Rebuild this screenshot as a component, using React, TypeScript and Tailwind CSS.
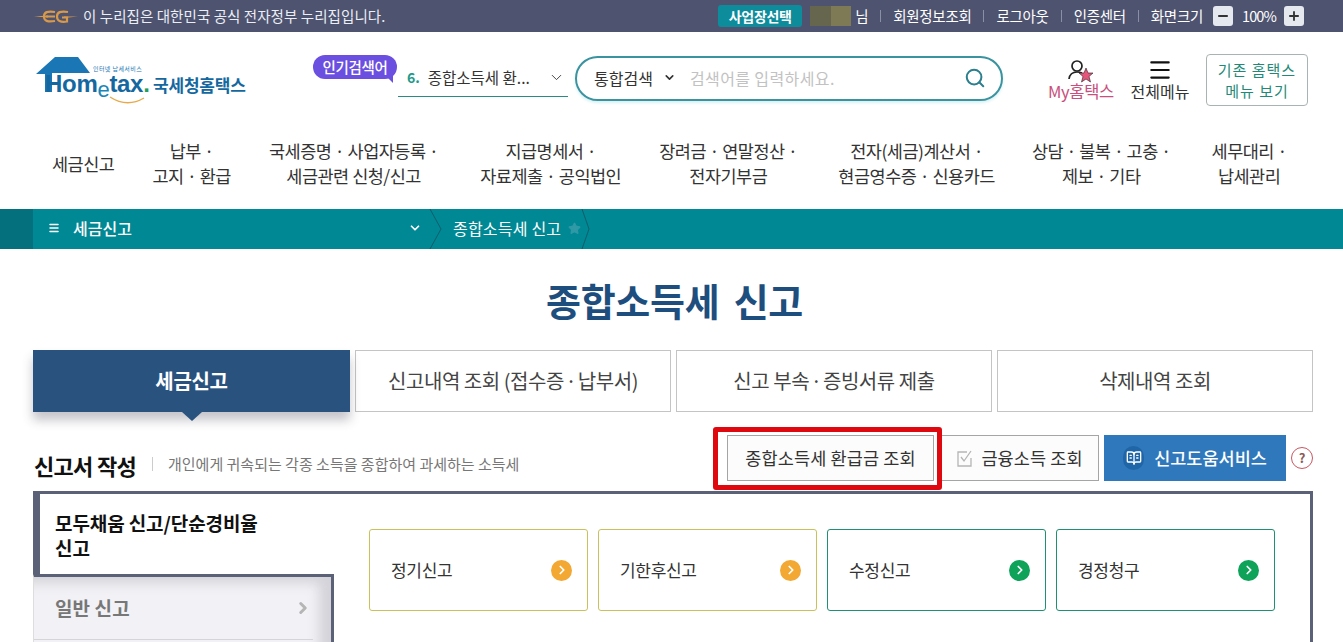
import React from "react";
import { ChevronDown, ChevronRight, Search, Menu, Minus, Plus, Star, BookOpenText } from "lucide-react";

const font = { fontFamily: '"Noto Sans CJK KR","Noto Sans",sans-serif' };

function Sep() {
  return <span className="mx-[12px] h-[12px] w-px bg-[#8b8fa3]" />;
}

function Dot() {
  return <span className="-mx-[2.5px]">·</span>;
}

function Logo() {
  return (
    <div className="relative h-[52px] w-[212px]">
      <svg className="absolute left-0 top-0" width="56" height="38" viewBox="0 0 56 38">
        <path d="M0 18 L19 1 L42 1 L54 17 L16 17 L16 36 L9 36 L9 18 Z" fill="#1a76b4" />
      </svg>
      <span className="absolute left-[57px] top-[9px] text-[6px] leading-[7px] tracking-[0.4px] text-[#1a76b4]">인터넷 납세서비스</span>
      <span className="absolute left-[9px] top-[17px] whitespace-nowrap text-[24px] font-bold leading-[21px] tracking-[-0.3px] text-[#14689f]" style={{ fontFamily: '"Liberation Sans",sans-serif' }}>
        Hom<span className="relative top-[5px] text-[22px] font-normal text-[#1a86b8]">e</span>tax<span className="text-[#1f9e5c]">.</span>
      </span>
      <svg className="absolute left-[73px] top-[40px]" width="36" height="9" viewBox="0 0 36 9">
        <path d="M1 1 Q18 12 35 2" stroke="#e8a94a" strokeWidth="1.4" fill="none" />
      </svg>
      <span className="absolute left-[117px] top-[16px] whitespace-nowrap text-[17px] font-bold leading-[26px] tracking-[-0.2px] text-[#14689f]">국세청홈택스</span>
    </div>
  );
}

function NavItem({ a, b, className = "" }: { a: string; b?: string; className?: string }) {
  return (
    <div className={`shrink-0 whitespace-nowrap text-center text-[17.5px] leading-[25px] tracking-[-0.5px] text-[#333] ${className}`}>
      <div>{a}</div>
      {b && <div>{b}</div>}
    </div>
  );
}

function Tab({ children }: { children: React.ReactNode }) {
  return (
    <div className="flex h-[62px] items-center justify-center whitespace-pre border border-[#c4c4c4] bg-white text-[20px] tracking-[-0.45px] text-[#444]">
      <span>{children}</span>
    </div>
  );
}

function Card({ label, tone }: { label: string; tone: "y" | "g" }) {
  const y = tone === "y";
  return (
    <div className={`flex h-[82px] w-[219px] items-center justify-between rounded-[3px] border pl-[21px] pr-[15px] ${y ? "border-[#c9c25a]" : "border-[#1f9070]"}`}>
      <span className="text-[17px] tracking-[-0.3px] text-[#333]">{label}</span>
      <span className={`flex h-[21px] w-[21px] items-center justify-center rounded-full ${y ? "bg-[#f2a833]" : "bg-[#0fa35a]"}`}>
        <ChevronRight size={14} strokeWidth={3} color="#fff" />
      </span>
    </div>
  );
}

export default function App() {
  return (
    <div className="h-[642px] w-[1343px] overflow-hidden bg-white" style={font}>
      {/* top bar */}
      <div className="flex h-[32px] items-center bg-[#4e5370] pl-[34px] pr-[39px] text-[14.5px] text-white">
        <svg width="44" height="15" viewBox="0 0 44 15" className="mr-[5px]">
          <path d="M0 7.5 L14 6.5 V8.5 Z M30 7.5 H44 L30 9 Z" fill="#d9994a" />
          <path d="M21 3 Q10 1 10 7.5 Q10 14 21 12 M12 7.5 H21" stroke="#d9994a" strokeWidth="2.2" fill="none" />
          <path d="M34 3 Q23 1 23 7.5 Q23 14 33 12.5 V8.5 H28" stroke="#d9994a" strokeWidth="2.2" fill="none" />
        </svg>
        <span className="tracking-[0.07px] text-[#eceef5]">이 누리집은 대한민국 공식 전자정부 누리집입니다.</span>
        <div className="ml-auto flex items-center tracking-[-0.3px]">
          <span className="flex h-[22px] w-[84px] items-center justify-center rounded-[3px] bg-[#0d8c9c] text-[14px] font-bold">사업장선택</span>
          <span className="ml-[8px] flex h-[20px] w-[41px]">
            <span className="flex-1 bg-[#66664f]" />
            <span className="flex-1 bg-[#7d7a55]" />
          </span>
          <span className="ml-[4px]">님</span>
          <Sep />
          <span>회원정보조회</span>
          <Sep />
          <span>로그아웃</span>
          <Sep />
          <span>인증센터</span>
          <Sep />
          <span>화면크기</span>
          <span className="ml-[10px] flex h-[20px] w-[20px] items-center justify-center rounded-[3px] bg-[#e6e8ef]"><Minus size={14} strokeWidth={3.2} color="#333" /></span>
          <span className="ml-[9px] w-[33px] whitespace-nowrap tracking-[-0.9px]">100%</span>
          <span className="ml-[9px] flex h-[20px] w-[20px] items-center justify-center rounded-[3px] bg-[#e6e8ef]"><Plus size={14} strokeWidth={3.2} color="#333" /></span>
        </div>
      </div>

      {/* header */}
      <div className="flex h-[96px] items-start pl-[36px]">
        <div className="mt-[24px]"><Logo /></div>
        <div className="relative ml-[150px] mt-[24px] flex h-[41px] w-[170px] items-center border-b border-[#2b8a84] pl-[9px] pt-[3px]">
          <span className="absolute -left-[85px] -top-[1px] flex h-[24px] w-[84px] items-center justify-center rounded-[12px] bg-[#6b4fe0] text-[14.5px] font-medium tracking-[-0.3px] text-white">
            인기검색어
            <span className="absolute bottom-[-4px] right-[4px] h-0 w-0 border-l-[7px] border-t-[7px] border-l-transparent border-t-[#6b4fe0]" />
          </span>
          <span className="mr-[8px] text-[14px] font-bold text-[#1d9a8c]">6.</span>
          <span className="whitespace-nowrap text-[15.5px] text-[#333]">종합소득세 환...</span>
          <ChevronDown className="ml-auto mr-[3px]" size={17} strokeWidth={1.4} color="#444" />
        </div>
        <div className="ml-[7px] mt-[24px] flex h-[45px] w-[428px] items-center rounded-[23px] border-2 border-[#3b93a0] pb-[2px] pl-[17px] pr-[15px] shadow-[0_2px_3px_#d8f0f2]">
          <span className="text-[16px] text-[#333]">통합검색</span>
          <ChevronDown className="ml-[10px]" size={13} strokeWidth={3} color="#333" />
          <span className="ml-[14px] text-[16px] tracking-[0.4px] text-[#c2c2c2]">검색어를 입력하세요.</span>
          <Search className="ml-auto" size={22} strokeWidth={2.2} color="#2c7f8c" />
        </div>
        <div className="ml-[43px] mt-[27px] flex w-[70px] flex-col items-center">
          <svg width="26" height="24" viewBox="0 0 26 24">
            <circle cx="9" cy="7" r="5" fill="none" stroke="#222" strokeWidth="1.7" />
            <path d="M1 20 Q2 13 9 13 Q12 13 14 14" fill="none" stroke="#222" strokeWidth="1.7" />
            <path d="M18 9 L20 14 L25 14 L21 17.5 L22.5 23 L18 20 L13.5 23 L15 17.5 L11 14 L16 14 Z" fill="#e8557b" stroke="#222" strokeWidth="0.6" />
          </svg>
          <span className="-mt-[3px] whitespace-nowrap text-[16.5px] leading-[22px] tracking-[-0.3px] text-[#c8507c]">My홈택스</span>
        </div>
        <div className="ml-[14px] mt-[25px] flex w-[60px] flex-col items-center">
          <Menu size={26} strokeWidth={2} color="#111" />
          <span className="-mt-[3px] whitespace-nowrap text-[16px] leading-[22px] text-[#333]">전체메뉴</span>
        </div>
        <div className="ml-[16px] mt-[22px] flex h-[52px] w-[102px] flex-col items-center justify-center rounded-[4px] border border-[#a8b4b4] text-[15px] leading-[21px] tracking-[1px] text-[#1f8a78]">
          <span>기존 홈택스</span>
          <span>메뉴 보기</span>
        </div>
      </div>

      {/* main nav */}
      <div className="flex h-[81px] items-center pb-[11px] pl-[52px]">
        <NavItem a="세금신고" />
        <NavItem a="납부 ·" b="고지 · 환급" className="ml-[38px]" />
        <NavItem a="국세증명 · 사업자등록 ·" b="세금관련 신청/신고" className="ml-[38px]" />
        <NavItem a="지급명세서 ·" b="자료제출 · 공익법인" className="ml-[42px]" />
        <NavItem a="장려금 · 연말정산 ·" b="전자기부금" className="ml-[38px]" />
        <NavItem a="전자(세금)계산서 ·" b="현금영수증 · 신용카드" className="ml-[41px]" />
        <NavItem a="상담 · 불복 · 고충 ·" b="제보 · 기타" className="ml-[37px]" />
        <NavItem a="세무대리 ·" b="납세관리" className="ml-[41px]" />
      </div>

      {/* breadcrumb */}
      <div className="flex h-[40px] items-center bg-[#008894] text-[16px] font-medium text-white">
        <div className="h-full w-[33px] bg-[#046f7d]" />
        <div className="ml-[15px] flex w-[381px] items-center pb-[2px]">
          <Menu size={12} strokeWidth={3} />
          <span className="ml-[13px]">세금신고</span>
          <ChevronDown className="ml-auto mr-[7px]" size={14} strokeWidth={3} />
        </div>
        <svg width="14" height="40" viewBox="0 0 14 40"><path d="M1 0 L12 20 L1 40" fill="none" stroke="#0c5f6b" /></svg>
        <span className="ml-[10px] pb-[2px] font-normal tracking-[0.2px]">종합소득세 신고</span>
        <Star className="ml-[7px] mb-[2px]" size={13} fill="#2f9aa5" color="#2f9aa5" />
        <svg width="10" height="40" viewBox="0 0 10 40"><path d="M1 0 L8 20 L1 40" fill="none" stroke="#0c5f6b" /></svg>
      </div>

      {/* title */}
      <div className="flex h-[101px] items-center justify-center pb-[1px] pl-[6px] text-[38px] font-bold tracking-[-0.3px] text-[#1d4e7e] [word-spacing:6px]">종합소득세 신고</div>

      {/* tabs */}
      <div className="grid grid-cols-[317px_316px_316px_316px] gap-x-[5px] pl-[33px]">
        <div className="relative flex h-[62px] items-center justify-center bg-[#29527f] text-[20px] font-bold tracking-[-0.3px] text-white shadow-[0_8px_10px_rgba(60,60,80,0.3)]">
          세금신고
          <span className="absolute left-[149px] top-[62px] h-0 w-0 border-x-[10px] border-t-[9px] border-x-transparent border-t-[#29527f]" />
        </div>
        <Tab>신고내역 조회 (접수증 <Dot /> 납부서)</Tab>
        <Tab>신고 부속 <Dot /> 증빙서류 제출</Tab>
        <Tab>삭제내역 조회</Tab>
      </div>

      {/* section head */}
      <div className="flex h-[79px] items-start pl-[34px] pr-[30px]">
        <span className="mt-[36px] text-[22px] font-bold leading-[34px] tracking-[-0.7px] text-[#111]">신고서 작성</span>
        <span className="ml-[16px] mt-[45px] h-[14px] w-px bg-[#ccc]" />
        <span className="ml-[15px] mt-[41px] text-[15px] leading-[22px] text-[#777]">개인에게 귀속되는 각종 소득을 종합하여 과세하는 소득세</span>
        <div className="ml-auto mt-[15px] flex items-start">
          <div className="h-[63px] w-[229px] rounded-[3px] border-[5px] border-[#e0080f] pb-[4px] pl-[9px] pr-[3px] pt-[3px]">
            <div className="flex h-[46px] w-[207px] items-center justify-center border border-[#a5a5a5] bg-[#fcfcfc] text-[17.5px] tracking-[0.15px] text-[#333]">종합소득세 환급금 조회</div>
          </div>
          <div className="mt-[8px] flex h-[46px] w-[157px] items-center justify-center gap-[8px] border border-l-0 border-[#a5a5a5] bg-[#fcfcfc] text-[17.5px] tracking-[0.1px] text-[#333]">
            <svg width="16" height="17" viewBox="0 0 16 17">
              <path d="M10 2 H1 V16 H14 V8" fill="none" stroke="#b5b5b5" strokeWidth="1.3" />
              <path d="M4 7 L7 11 L14 1" fill="none" stroke="#b5b5b5" strokeWidth="1.3" />
            </svg>
            금융소득 조회
          </div>
          <div className="ml-[5px] mt-[8px] flex h-[46px] w-[182px] items-center justify-center gap-[10px] bg-[#2f78bb] text-[17.5px] font-medium text-white">
            <span className="flex h-[24px] w-[21px] items-center justify-center rounded-full bg-[#1f66a8]"><BookOpenText size={16} color="#fff" /></span>
            신고도움서비스
          </div>
          <span className="ml-[5px] mt-[20px] flex h-[22px] w-[22px] items-center justify-center rounded-full border-[1.5px] border-[#c9575f] text-[13px] font-bold text-[#8a5a5a]">?</span>
        </div>
      </div>

      {/* panel */}
      <div className="ml-[33px] flex h-[200px] w-[1280px] border-r-[3px] border-t-[3px] border-[#5b6278]">
        <div className="flex w-[301px] shrink-0 flex-col">
          <div className="h-[80px] border-l-[7px] border-[#5b6278] pl-[15px] pr-[50px] pt-[16px] text-[19px] font-bold leading-[25px] tracking-[-0.1px] text-[#111] [word-break:keep-all]">모두채움 신고/단순경비율 신고</div>
          <div className="flex-1 border-l border-r-[3px] border-t-[3px] border-l-[#ddd] border-r-[#5b6278] border-t-[#5b6278] bg-[#f2f2f6] pr-[18px] shadow-[inset_-12px_6px_12px_rgba(120,120,130,0.25)]">
            <div className="flex h-[63px] items-center justify-between border-b border-[#d5d5d8] pl-[21px] pr-[1px]">
              <span className="text-[19px] font-bold tracking-[0.1px] text-[#777]">일반 신고</span>
              <ChevronRight size={18} strokeWidth={4} color="#b5b5b5" />
            </div>
          </div>
        </div>
        <div className="ml-[35px] mt-[35px] flex gap-[10px]">
          <Card label="정기신고" tone="y" />
          <Card label="기한후신고" tone="y" />
          <Card label="수정신고" tone="g" />
          <Card label="경정청구" tone="g" />
        </div>
      </div>
    </div>
  );
}
